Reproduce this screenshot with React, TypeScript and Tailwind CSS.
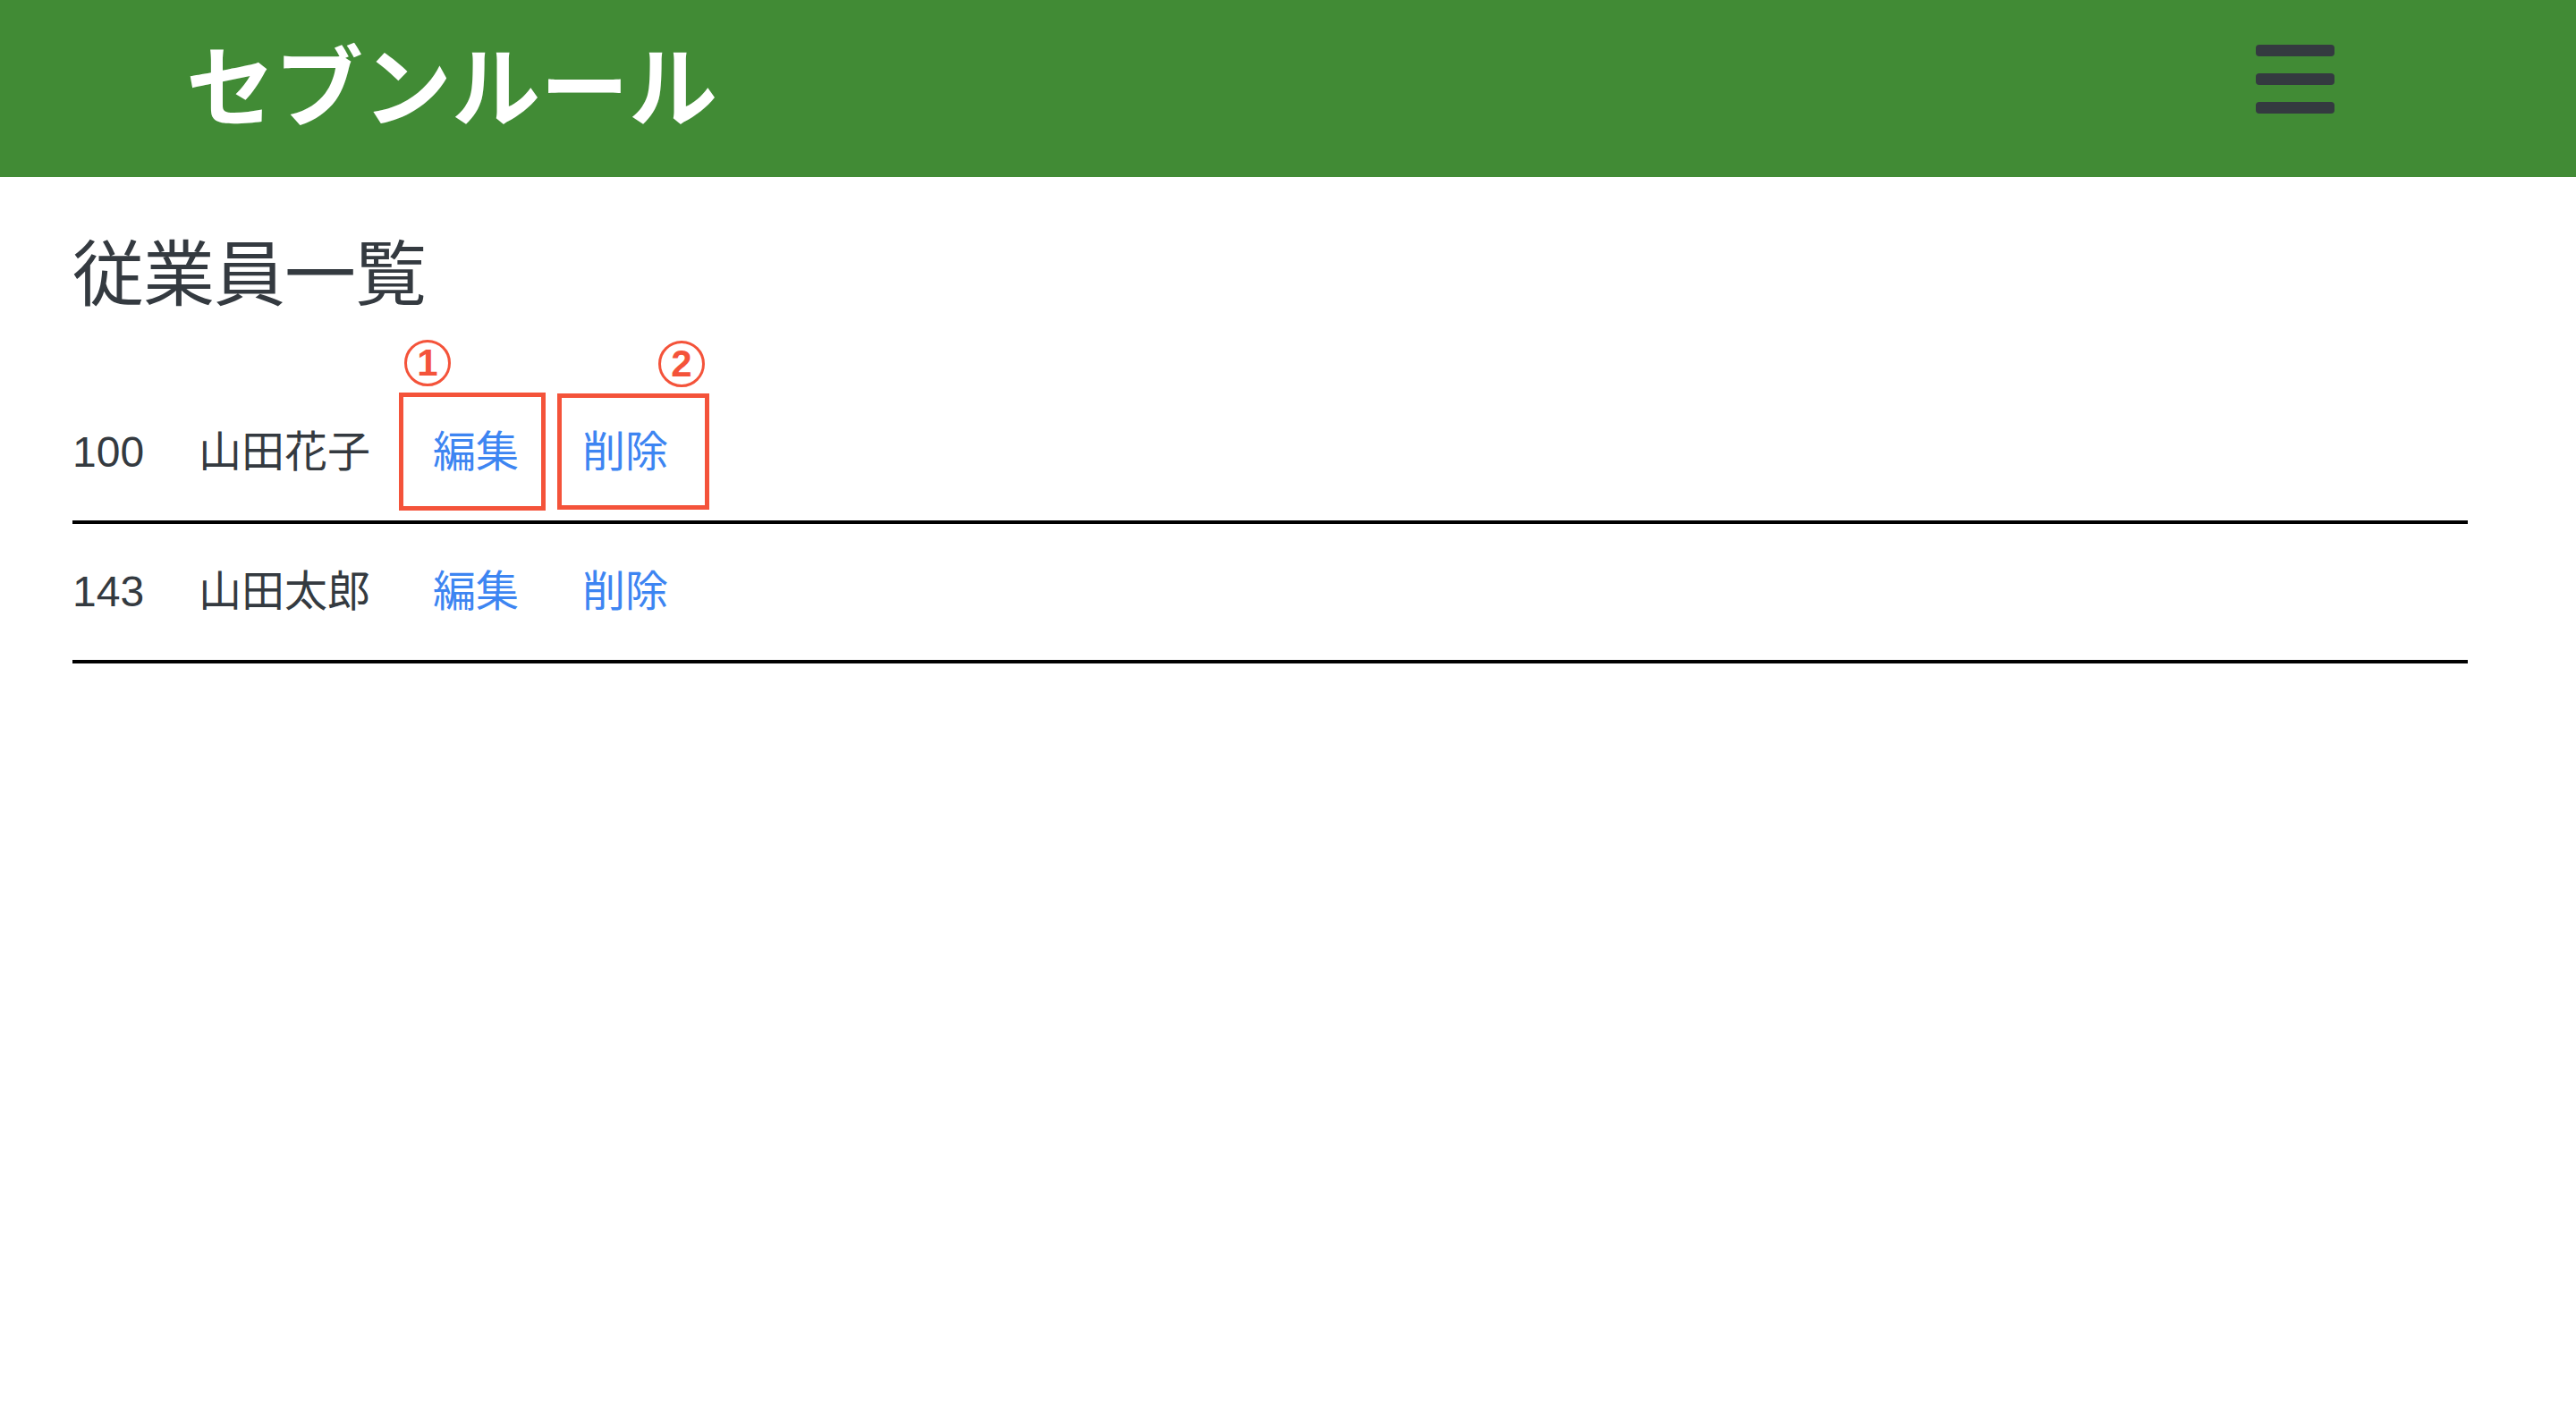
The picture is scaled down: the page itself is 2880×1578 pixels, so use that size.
import React from "react";

type Employee = {
  id: string;
  name: string;
};

const employees: Employee[] = [
  { id: "100", name: "山田花子" },
  { id: "143", name: "山田太郎" },
];

const font = {
  fontFamily: '"Liberation Sans", "Noto Sans CJK JP", sans-serif',
};

function Marker({ n }: { n: string }) {
  return (
    <div className="w-[52px] h-[52px] rounded-full border-[3px] border-[#f4533a] flex items-center justify-center text-[#f4533a] text-[42px] font-bold leading-none">
      {n}
    </div>
  );
}

export default function App() {
  return (
    <div className="min-h-screen bg-white text-[#343a40]" style={font}>
      {/* Header */}
      <header className="h-[198px] bg-[#418b35] flex items-center justify-between pl-[208px] pr-[270px]">
        <h1 className="text-white text-[99px] font-bold leading-none">
          セブンルール
        </h1>
        <button className="flex flex-col gap-[19px] w-[88px] mb-[22px]">
          <span className="block h-[13px] w-full rounded-[4px] bg-[#343a40]" />
          <span className="block h-[13px] w-full rounded-[4px] bg-[#343a40]" />
          <span className="block h-[13px] w-full rounded-[4px] bg-[#343a40]" />
        </button>
      </header>

      <main className="pl-[81px] pr-[121px]">
        <h2 className="text-[80px] leading-none font-normal mt-[70px] tracking-[-1px]">
          従業員一覧
        </h2>

        <ul className="mt-[82px]">
          {employees.map((e, i) => (
            <li
              key={e.id}
              className="relative flex items-center h-[156px] border-b-4 border-black text-[48px] leading-none"
            >
              <span className="w-[141px]">{e.id}</span>
              <span className="w-[262px]">{e.name}</span>
              <a className="text-[#3d85f2] w-[167px] cursor-pointer">編集</a>
              <a className="text-[#3d85f2] cursor-pointer">削除</a>

              {i === 0 && (
                <>
                  <div className="absolute left-[365px] top-[9px] w-[164px] h-[132px] border-[5px] border-[#f4533a]" />
                  <div className="absolute left-[542px] top-[10px] w-[170px] h-[130px] border-[5px] border-[#f4533a]" />
                  <div className="absolute left-[371px] top-[-50px]">
                    <Marker n="1" />
                  </div>
                  <div className="absolute left-[655px] top-[-49px]">
                    <Marker n="2" />
                  </div>
                </>
              )}
            </li>
          ))}
        </ul>
      </main>
    </div>
  );
}
